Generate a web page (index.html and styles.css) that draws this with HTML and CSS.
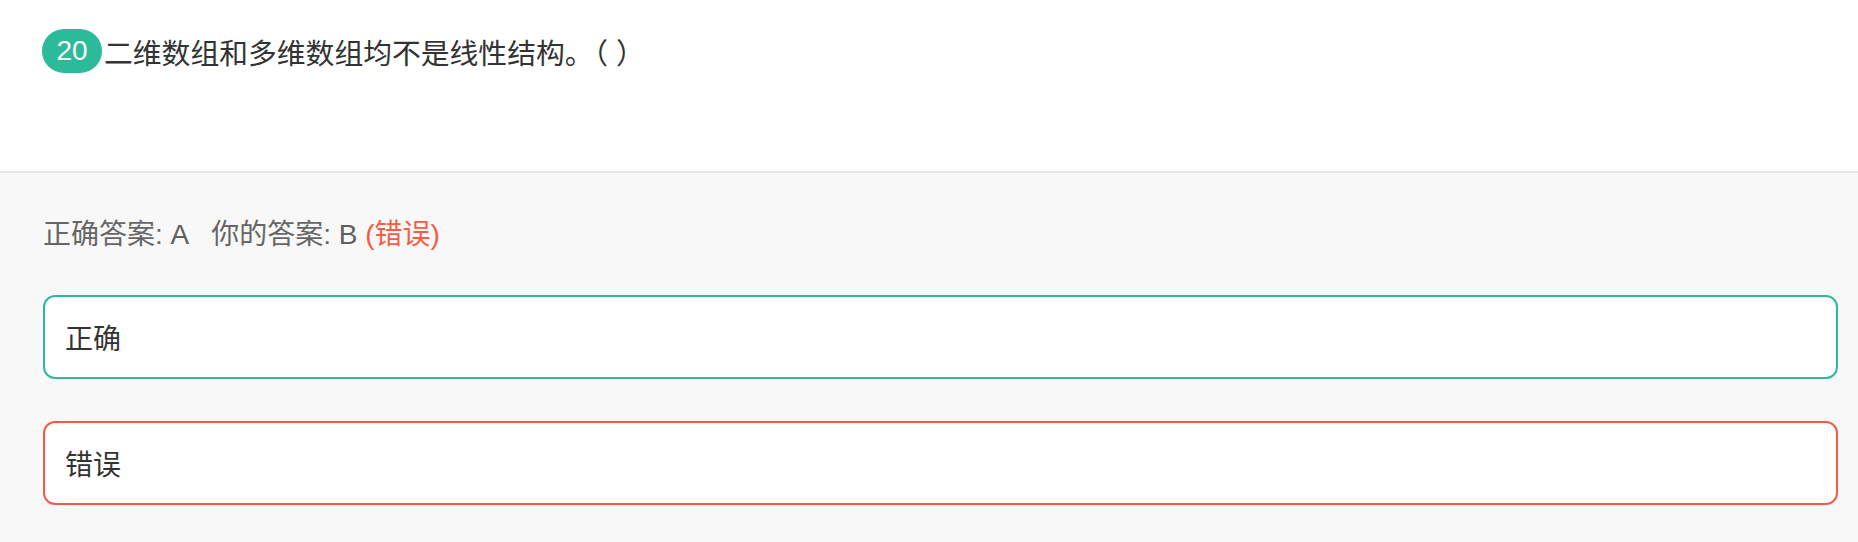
FILE: index.html
```html
<!DOCTYPE html>
<html lang="zh">
<head>
<meta charset="utf-8">
<link rel="stylesheet" href="styles.css">
</head>
<body>
<div class="page">
  <section class="question">
    <div class="q-line">
      <span class="badge">20</span>
      <span class="q-text">二维数组和多维数组均不是线性结构。（ ）</span>
    </div>
  </section>
  <section class="answer-area">
    <div class="result">
      <span>正确答案: <span class="letter">A</span></span>
      <span class="yours">你的答案: <span class="letter">B</span> <span class="wrong-tag">(错误)</span></span>
    </div>
    <div class="option correct">正确</div>
    <div class="option wrong">错误</div>
  </section>
</div>
</body>
</html>
```
FILE: styles.css
```css
html, body {
  margin: 0;
  padding: 0;
  background: #f8f8f8;
}
body {
  font-family: "Liberation Sans", "Noto Sans CJK SC", sans-serif;
  color: #333;
}
.page {
  width: 1858px;
  height: 542px;
  overflow: hidden;
}
.question {
  background: #fff;
  height: 173px;
  box-sizing: border-box;
  padding: 29px 20px 0 42px;
  border-bottom: 2px solid #e6e6e6;
}
.q-line {
  display: flex;
  align-items: center;
  gap: 2px;
}
.badge {
  display: inline-flex;
  align-items: center;
  justify-content: center;
  width: 60px;
  height: 44px;
  border-radius: 22px;
  background: #2bbb98;
  color: #fff;
  font-size: 28px;
  font-family: "Liberation Sans", sans-serif;
}
.q-text {
  font-size: 28.8px;
  color: #333;
}
.answer-area {
  padding: 0 20px 0 43px;
}
.result {
  height: 122px;
  display: flex;
  align-items: center;
  gap: 22px;
  font-size: 28px;
  color: #666;
  box-sizing: border-box;
  padding-bottom: 4px;
}
.letter {
  font-family: "Liberation Sans", sans-serif;
  color: #5f5f5f;
}
.wrong-tag {
  color: #f65b45;
}
.option {
  height: 84px;
  box-sizing: border-box;
  background: #fff;
  border: 2px solid;
  border-radius: 12px;
  display: flex;
  align-items: center;
  padding-left: 20px;
  font-size: 28px;
  color: #333;
}
.option.correct {
  border-color: #2bbb98;
}
.option.wrong {
  border-color: #f65b45;
  margin-top: 42px;
}
```
